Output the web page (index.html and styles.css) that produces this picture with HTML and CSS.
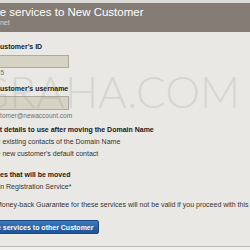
FILE: index.html
```html
<!DOCTYPE html>
<html lang="en">

<head>
    <meta charset="UTF-8" />
    <title>Move services to New Customer</title>
    <link rel="stylesheet" href="styles.css">
</head>

<body>

    <div class="page-head">
        <h1 class="page-title">Move services to New Customer</h1>
        <div class="page-sub">domain.net</div>
    </div>

    <div class="form">
        <div class="field-label">Customer's ID</div>
        <div class="field-input"></div>
        <div class="field-hint hint-id">12345</div>

        <div class="field-label label-gap">Customer's username</div>
        <div class="field-input input-2"></div>
        <div class="field-hint hint-mail">customer@newaccount.com</div>

        <div class="section-title title-contact">Contact details to use after moving the Domain Name</div>
        <div class="option opt-contact">Use existing contacts of the Domain Name</div>
        <div class="option opt-contact">Use new customer's default contact</div>

        <div class="section-title title-services">Services that will be moved</div>
        <div class="option opt-service">Domain Registration Service*</div>

        <div class="note">Money-back Guarantee for these services will not be valid if you proceed with this action.</div>

        <div class="btn-row">
            <span class="btn-move">Move services to other Customer</span>
        </div>
    </div>

    <div class="page-foot"></div>

    <div class="watermark">GRAHA.COM</div>

</body>

</html>
```

FILE: styles.css
```css
:root {
    --bg: #eae8e4;
    --head: #857c75;
    --text: #1a1a1a;
    --hint: #6e6e6e;
}

html,
body {
    height: 100%;
}

body {
    margin: 0;
    background: var(--bg);
    font-family: "Liberation Sans", Arial, sans-serif;
    color: var(--text);
    overflow: hidden;
    position: relative;
    border-top: 3px solid #dcdad7;
    box-sizing: border-box;
}

.page-head {
    background: var(--head);
    padding: 1px 0 4px;
    white-space: nowrap;
}

.page-title {
    margin: 0 0 0 -22px;
    font-size: 11.5px;
    font-weight: normal;
    line-height: 16px;
    color: #fff;
}

.page-sub {
    font-size: 7px;
    line-height: 10px;
    margin: -2px 0 0 -25px;
    color: #d9d3cc;
}

.form {
    white-space: nowrap;
    padding-top: 8px;
}

.field-label {
    font-size: 7px;
    font-weight: bold;
    line-height: 13px;
    margin-left: -5px;
}

.label-gap {
    margin-top: 4px;
}

.field-input {
    width: 80px;
    height: 11px;
    margin: 2px 0 0 -13px;
    background: #d6d2c4;
    border: 1px solid #aeaa9c;
}

.input-2 {
    height: 12px;
    margin-top: 1px;
}

.field-hint {
    font-size: 6.5px;
    line-height: 10px;
    color: var(--hint);
}

.hint-id {
    margin-left: -14px;
}

.hint-mail {
    margin: 1px 0 0 -10px;
}

.section-title {
    font-size: 7px;
    font-weight: bold;
    line-height: 12px;
}

.title-contact {
    margin: 3px 0 0 -24px;
}

.title-services {
    margin: 9px 0 0 -21px;
}

.option {
    font-size: 7px;
    line-height: 12px;
    color: #333;
}

.opt-contact {
    margin-left: -12px;
}

.opt-service {
    margin-left: -20px;
}

.note {
    font-size: 7px;
    line-height: 12px;
    color: #333;
    margin: 6px 0 0 -4px;
}

.btn-row {
    display: flex;
    margin-top: 9px;
}

.btn-move {
    margin-left: -26px;
    padding: 0 5px 0 8px;
    height: 14px;
    line-height: 14px;
    font-size: 7px;
    font-weight: bold;
    color: #fff;
    background: linear-gradient(#3b78bc, #1d5396);
    border: 1px solid #1a4a82;
    border-radius: 2px;
    box-sizing: border-box;
}

.page-foot {
    margin-top: 12px;
    border-top: 1px solid #bdbbb7;
    height: 20px;
    background: #f2f1ef;
}

.watermark {
    position: absolute;
    top: 66px;
    left: -23px;
    font-family: Lato, "Liberation Sans", sans-serif;
    font-weight: 300;
    font-size: 44px;
    line-height: 44px;
    color: rgba(150, 146, 140, 0.24);
    pointer-events: none;
    white-space: nowrap;
}
```
